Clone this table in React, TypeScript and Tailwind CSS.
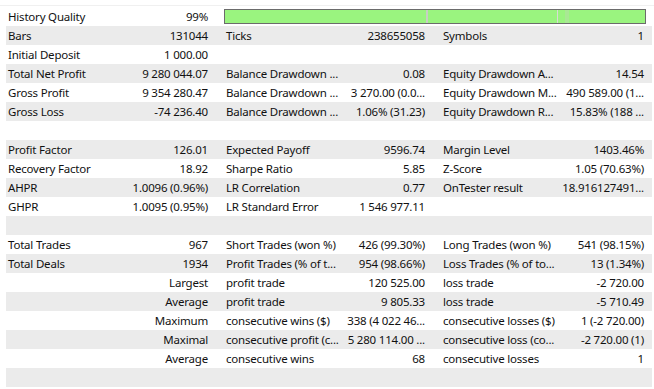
import React from "react";

type Row = [string, string, string, string, string, string];

const rows: Row[] = [
  ["History Quality", "99%", "", "", "", ""],
  ["Bars", "131044", "Ticks", "238655058", "Symbols", "1"],
  ["Initial Deposit", "1 000.00", "", "", "", ""],
  ["Total Net Profit", "9 280 044.07", "Balance Drawdown ...", "0.08", "Equity Drawdown A...", "14.54"],
  ["Gross Profit", "9 354 280.47", "Balance Drawdown ...", "3 270.00 (0.0...", "Equity Drawdown M...", "490 589.00 (1..."],
  ["Gross Loss", "-74 236.40", "Balance Drawdown ...", "1.06% (31.23)", "Equity Drawdown R...", "15.83% (188 ..."],
  ["", "", "", "", "", ""],
  ["Profit Factor", "126.01", "Expected Payoff", "9596.74", "Margin Level", "1403.46%"],
  ["Recovery Factor", "18.92", "Sharpe Ratio", "5.85", "Z-Score", "1.05 (70.63%)"],
  ["AHPR", "1.0096 (0.96%)", "LR Correlation", "0.77", "OnTester result", "18.916127491..."],
  ["GHPR", "1.0095 (0.95%)", "LR Standard Error", "1 546 977.11", "", ""],
  ["", "", "", "", "", ""],
  ["Total Trades", "967", "Short Trades (won %)", "426 (99.30%)", "Long Trades (won %)", "541 (98.15%)"],
  ["Total Deals", "1934", "Profit Trades (% of t...", "954 (98.66%)", "Loss Trades (% of to...", "13 (1.34%)"],
  ["", "Largest", "profit trade", "120 525.00", "loss trade", "-2 720.00"],
  ["", "Average", "profit trade", "9 805.33", "loss trade", "-5 710.49"],
  ["", "Maximum", "consecutive wins ($)", "338 (4 022 46...", "consecutive losses ($)", "1 (-2 720.00)"],
  ["", "Maximal", "consecutive profit (c...", "5 280 114.00 ...", "consecutive loss (co...", "-2 720.00 (1)"],
  ["", "Average", "consecutive wins", "68", "consecutive losses", "1"],
  ["", "", "", "", "", ""],
];

function Cell({ label, value, cls }: { label: string; value: string; cls: string }) {
  return (
    <div className={`flex items-center justify-between whitespace-nowrap overflow-hidden ${cls}`}>
      <span>{label}</span>
      <span>{value}</span>
    </div>
  );
}

export default function App() {
  return (
    <div
      className="w-[654px] h-[389px] bg-white text-[#111111] overflow-hidden"
      style={{ fontFamily: '"Noto Sans", "Open Sans", sans-serif' }}
    >
      <div className="mt-[5px] border-t border-[#f0f0f0] pt-[1px] pl-[6px] pr-[2px] text-[11.5px] tracking-[-0.2px] leading-[19px]">
        {rows.map((r, i) => (
          <div
            key={i}
            className={`grid grid-cols-[217px_217px_212px] h-[19px] ${i % 2 === 1 ? "bg-[#ebebeb]" : "bg-white"}`}
          >
            <Cell label={r[0]} value={r[1]} cls="pl-[2px] pr-[15px]" />
            {i === 0 ? (
              <div className="col-span-2 pl-[1px] pr-[6px] pt-[2px]">
                <div className="relative h-[15px] border border-[#6b6b6b] bg-[#9af47f]">
                  <div className="absolute top-0 bottom-0 left-[201px] w-[2px] bg-[#c8cfc4]" />
                  <div className="absolute top-0 bottom-0 left-[332px] w-[1px] bg-[#d8dcd4]" />
                  <div className="absolute top-0 bottom-0 left-[340px] w-[4px] bg-[#a9e894]" />
                </div>
              </div>
            ) : (
              <>
                <Cell label={r[2]} value={r[3]} cls="pl-[3px] pr-[15px]" />
                <Cell label={r[4]} value={r[5]} cls="pl-[3px] pr-[8px]" />
              </>
            )}
          </div>
        ))}
      </div>
    </div>
  );
}
